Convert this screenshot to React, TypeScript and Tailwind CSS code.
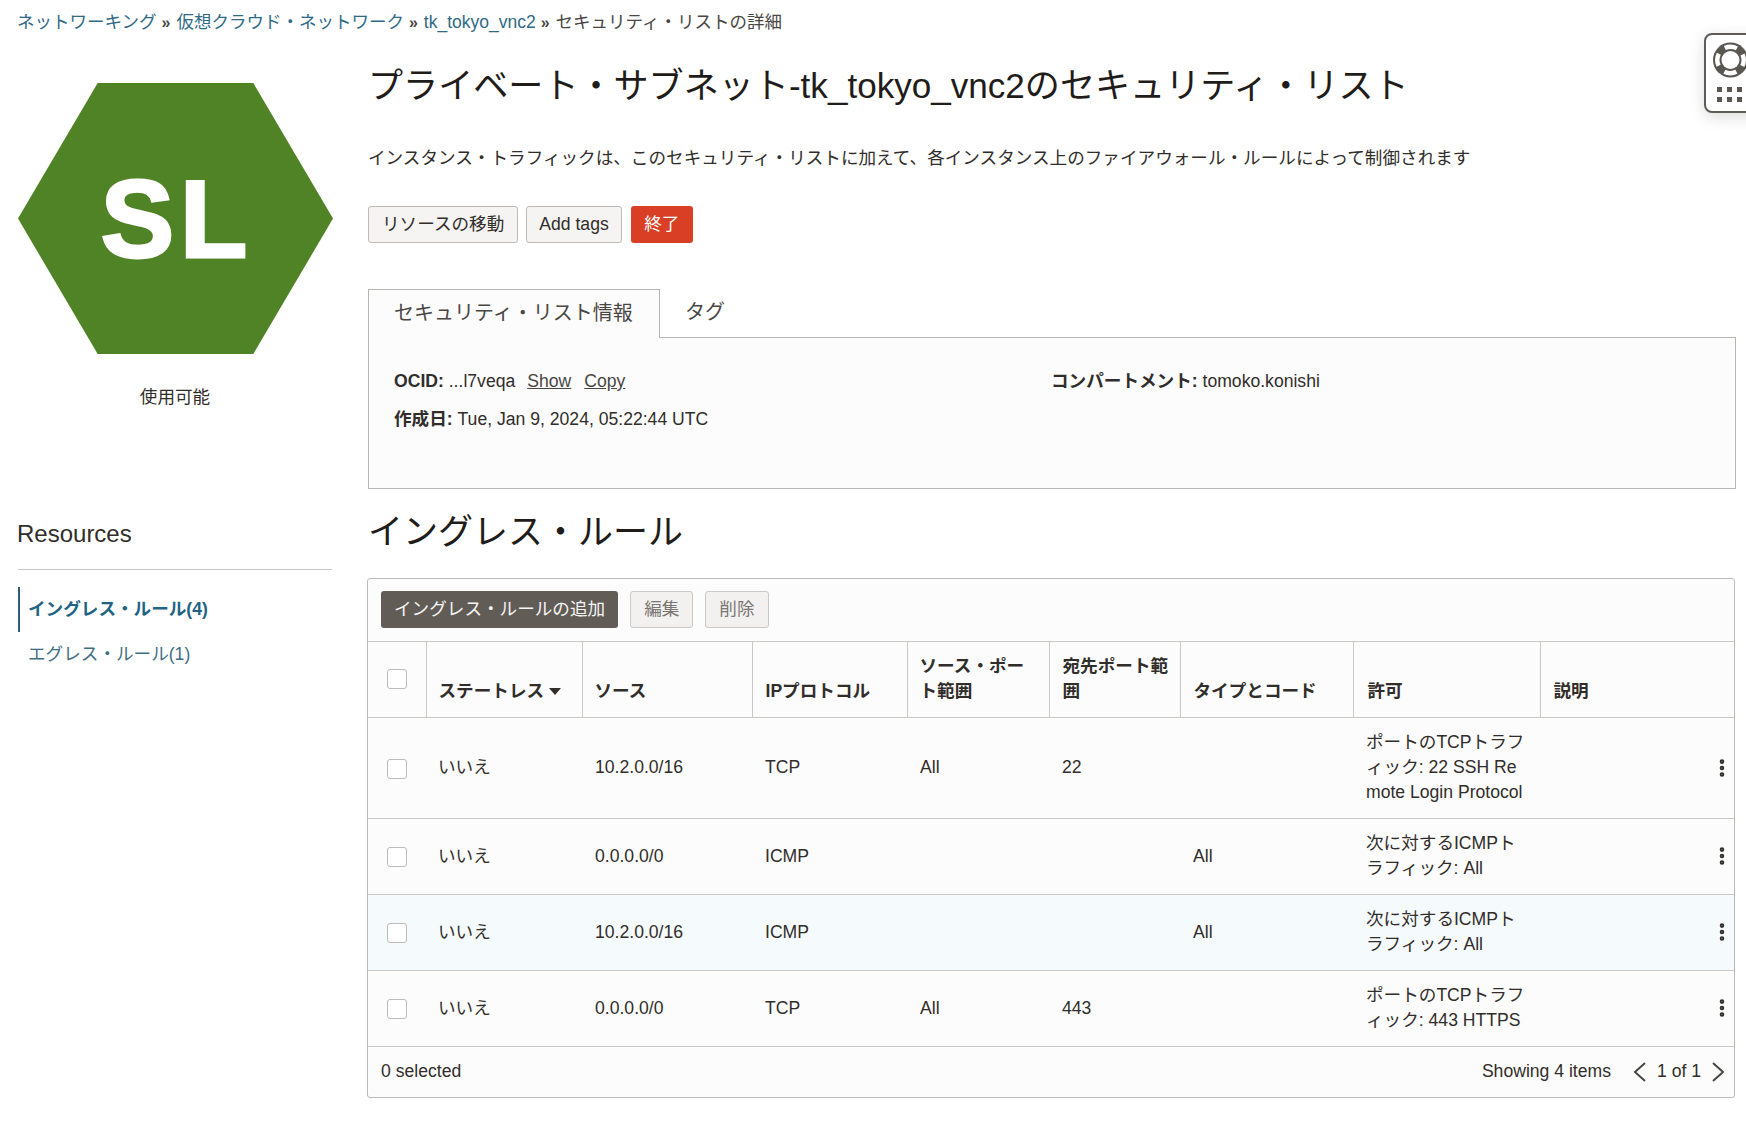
import { EllipsisVertical } from "lucide-react";

const rows = [
  { source: "10.2.0.0/16", proto: "TCP", port: "All", dest: "22", type: "", allow: "ポートのTCPトラフィック: 22 SSH Remote Login Protocol", hover: false },
  { source: "0.0.0.0/0", proto: "ICMP", port: "", dest: "", type: "All", allow: "次に対するICMPトラフィック: All", hover: false },
  { source: "10.2.0.0/16", proto: "ICMP", port: "", dest: "", type: "All", allow: "次に対するICMPトラフィック: All", hover: true },
  { source: "0.0.0.0/0", proto: "TCP", port: "All", dest: "443", type: "", allow: "ポートのTCPトラフィック: 443 HTTPS", hover: false },
];

function Checkbox() {
  return <input type="checkbox" className="block appearance-none w-5 h-5 rounded-[3px] border border-[#bdbab7] bg-white" />;
}

function HelpWidget() {
  return (
    <div className="absolute left-[1704px] top-[33px] w-[70px] h-[80px] rounded-lg border-2 border-[#5f5b57] bg-white shadow-[0_4px_16px_rgba(0,0,0,0.14)]">
      <svg width="60" height="70" viewBox="0 0 60 70" className="block">
        <circle cx="24.5" cy="25" r="17.5" fill="#5a5652" />
        <circle cx="24.5" cy="25" r="13.25" fill="none" stroke="#fff" strokeWidth="4.5" strokeDasharray="12.5 8.31" strokeDashoffset="6.25" />
        <circle cx="24.5" cy="25" r="9" fill="#fff" />
        <g fill="#5a5652">
          <rect x="11" y="52" width="5" height="5" />
          <rect x="21" y="52" width="5" height="5" />
          <rect x="31" y="52" width="5" height="5" />
          <rect x="11" y="62" width="5" height="5" />
          <rect x="21" y="62" width="5" height="5" />
          <rect x="31" y="62" width="5" height="5" />
        </g>
      </svg>
    </div>
  );
}

function Sep() {
  return <span className="ml-[5px] mr-[6px] text-[#4a4643] font-bold text-[16px]">»</span>;
}

export default function App() {
  return (
    <div className="relative w-[1746px] h-[1122px] overflow-hidden bg-white text-[#312d2a] text-[17.6px] leading-[25px] [font-family:'Liberation_Sans','Noto_Sans_CJK_JP',sans-serif]">
      <HelpWidget />

      {/* Breadcrumb */}
      <nav className="h-[62px] pl-[17px] pt-[10px] text-[17.5px]">
        <a className="text-[#2f6a87]">ネットワーキング</a>
        <Sep />
        <a className="text-[#2f6a87]">仮想クラウド・ネットワーク</a>
        <Sep />
        <a className="text-[#2f6a87]">tk_tokyo_vnc2</a>
        <Sep />
        <span className="text-[#4a4643]">セキュリティ・リストの詳細</span>
      </nav>

      <div className="flex gap-[36px] pl-[18px] pr-[10px]">
        {/* Left column */}
        <aside className="w-[314px] shrink-0 pt-[21px]">
          <div className="w-[315px] h-[271px] pl-[3px] flex items-center justify-center bg-[#508226] [clip-path:polygon(25.3%_0,74.7%_0,100%_50%,74.7%_100%,25.3%_100%,0_50%)]">
            <span className="text-white font-bold text-[110px] leading-none tracking-[6px] [-webkit-text-stroke:3px_white]">SL</span>
          </div>
          <div className="mt-[31px] text-center text-[#312d2a]">使用可能</div>

          <h3 className="mt-[109px] -ml-px text-[24px] leading-[30px]">Resources</h3>
          <div className="mt-[20px] border-t border-[#c9c6c3]" />
          <ul className="mt-[17px]">
            <li className="h-[45px] flex items-center pl-[8px] border-l-2 border-[#2c5d7a] font-bold text-[#1f6485]">イングレス・ルール(4)</li>
            <li className="h-[45px] flex items-center pl-[10px] text-[#3f6e84]">エグレス・ルール(1)</li>
          </ul>
        </aside>

        {/* Main column */}
        <main className="flex-1 min-w-0">
          <h1 className="pt-px text-[35.1px] leading-[46px] text-[#1f1c1a]">プライベート・サブネット-tk_tokyo_vnc2のセキュリティ・リスト</h1>
          <p className="mt-[37px]">インスタンス・トラフィックは、このセキュリティ・リストに加えて、各インスタンス上のファイアウォール・ルールによって制御されます</p>

          <div className="mt-[35px] flex gap-[8px]">
            <button className="h-[37px] px-[13px] rounded-[3px] border border-[#bdbab7] bg-[#f5f4f2]">リソースの移動</button>
            <button className="h-[37px] px-[12px] rounded-[3px] border border-[#bdbab7] bg-[#f5f4f2]">Add tags</button>
            <button className="ml-px h-[37px] px-[13.5px] rounded-[3px] bg-[#d93f25] text-white">終了</button>
          </div>

          {/* Tabs */}
          <div className="mt-[46px] flex text-[20px] text-[#4a4643]">
            <div className="relative -mb-px w-[292px] h-[49px] pl-[25px] pb-[2px] flex items-center border border-b-0 border-[#b8b5b2] bg-[#fcfcfc]">セキュリティ・リスト情報</div>
            <div className="pl-[25px] h-[46px] flex items-center">タグ</div>
          </div>
          <div className="h-[152px] border border-[#b8b5b2] bg-[#fcfcfc] pl-[25px] pr-[27px] pt-[31px]">
            <div className="grid grid-cols-2">
              <div>
                <b className="font-bold">OCID:</b> ...l7veqa
                <a className="ml-[12px] underline text-[#4a4643]">Show</a>
                <a className="ml-[13px] underline text-[#4a4643]">Copy</a>
              </div>
              <div>
                <b className="font-bold">コンパートメント:</b> tomoko.konishi
              </div>
            </div>
            <div className="mt-[13px]">
              <b className="font-bold">作成日:</b> Tue, Jan 9, 2024, 05:22:44 UTC
            </div>
          </div>

          <h2 className="mt-[20px] text-[35px] leading-[46px] text-[#1f1c1a]">イングレス・ルール</h2>

          {/* Rules table */}
          <div className="mt-[23px] -ml-px mr-px rounded-[3px] border border-[#bdbab7] bg-[#fcfcfc]">
            <div className="flex gap-[12px] px-[13px] pt-[12px] pb-[13px] border-b border-[#cbc8c6]">
              <button className="h-[37px] px-[13px] pb-px rounded-[3px] bg-[#625c57] text-[#f5f5f5]">イングレス・ルールの追加</button>
              <button className="h-[37px] px-[13px] pb-px rounded-[3px] border border-[#cbc8c6] bg-[#f2f1ef] text-[#7a7673]">編集</button>
              <button className="h-[37px] px-[13px] pb-px rounded-[3px] border border-[#cbc8c6] bg-[#f2f1ef] text-[#7a7673]">削除</button>
            </div>

            <table className="w-full table-fixed border-collapse">
              <colgroup>
                <col className="w-[58px]" />
                <col className="w-[156px]" />
                <col className="w-[170px]" />
                <col className="w-[155px]" />
                <col className="w-[142px]" />
                <col className="w-[131px]" />
                <col className="w-[173px]" />
                <col className="w-[187px]" />
                <col />
              </colgroup>
              <thead>
                <tr className="h-[75px] text-left font-bold">
                  <th className="pl-[19px] align-middle"><Checkbox /></th>
                  <th className="border-l border-[#cbc8c6] px-[12px] pb-[13px] align-bottom">
                    <span className="inline-flex items-center gap-[5px]">
                      ステートレス
                      <svg width="12" height="7" viewBox="0 0 12 7"><polygon points="0,0 12,0 6,7" fill="#312d2a" /></svg>
                    </span>
                  </th>
                  <th className="border-l border-[#cbc8c6] px-[12px] pb-[13px] align-bottom">ソース</th>
                  <th className="border-l border-[#cbc8c6] px-[13px] pb-[13px] align-bottom">IPプロトコル</th>
                  <th className="border-l border-[#cbc8c6] px-[12px] pb-[13px] align-bottom">ソース・ポート範囲</th>
                  <th className="border-l border-[#cbc8c6] pl-[13px] pr-[8px] pb-[13px] align-bottom break-all">宛先ポート範囲</th>
                  <th className="border-l border-[#cbc8c6] px-[13px] pb-[13px] align-bottom">タイプとコード</th>
                  <th className="border-l border-[#cbc8c6] px-[14px] pb-[13px] align-bottom">許可</th>
                  <th className="border-l border-[#cbc8c6] px-[13px] pb-[13px] align-bottom">説明</th>
                </tr>
              </thead>
              <tbody>
                {rows.map((r, i) => (
                  <tr key={i} className={`border-t border-[#cbc8c6] ${r.hover ? "bg-[#f5fafd]" : ""}`}>
                    <td className="pl-[19px] pt-[2px] align-middle"><Checkbox /></td>
                    <td className="px-[12px] py-[12.5px] align-middle">いいえ</td>
                    <td className="px-[13px] py-[12.5px] align-middle">{r.source}</td>
                    <td className="px-[13px] py-[12.5px] align-middle">{r.proto}</td>
                    <td className="px-[13px] py-[12.5px] align-middle">{r.port}</td>
                    <td className="px-[13px] py-[12.5px] align-middle">{r.dest}</td>
                    <td className="px-[13px] py-[12.5px] align-middle">{r.type}</td>
                    <td className="pl-[13px] pr-[13px] py-[12.5px] align-middle break-all">{r.allow}</td>
                    <td className="align-middle pr-[1px]">
                      <div className="flex justify-end">
                        <EllipsisVertical size={22} strokeWidth={3} className="text-[#312d2a]" />
                      </div>
                    </td>
                  </tr>
                ))}
              </tbody>
            </table>

            <div className="h-[51px] pl-[13px] pr-[9px] flex items-center justify-between border-t border-[#cbc8c6]">
              <span>0 selected</span>
              <div className="flex items-center">
                <span>Showing 4 items</span>
                <svg width="14" height="20" viewBox="0 0 14 20" className="ml-[22px]"><polyline points="12,1 2,10 12,19" fill="none" stroke="#4a4643" strokeWidth="2" /></svg>
                <span className="ml-[10px]">1 of 1</span>
                <svg width="14" height="20" viewBox="0 0 14 20" className="ml-[10px]"><polyline points="2,1 12,10 2,19" fill="none" stroke="#4a4643" strokeWidth="2" /></svg>
              </div>
            </div>
          </div>
        </main>
      </div>
    </div>
  );
}
